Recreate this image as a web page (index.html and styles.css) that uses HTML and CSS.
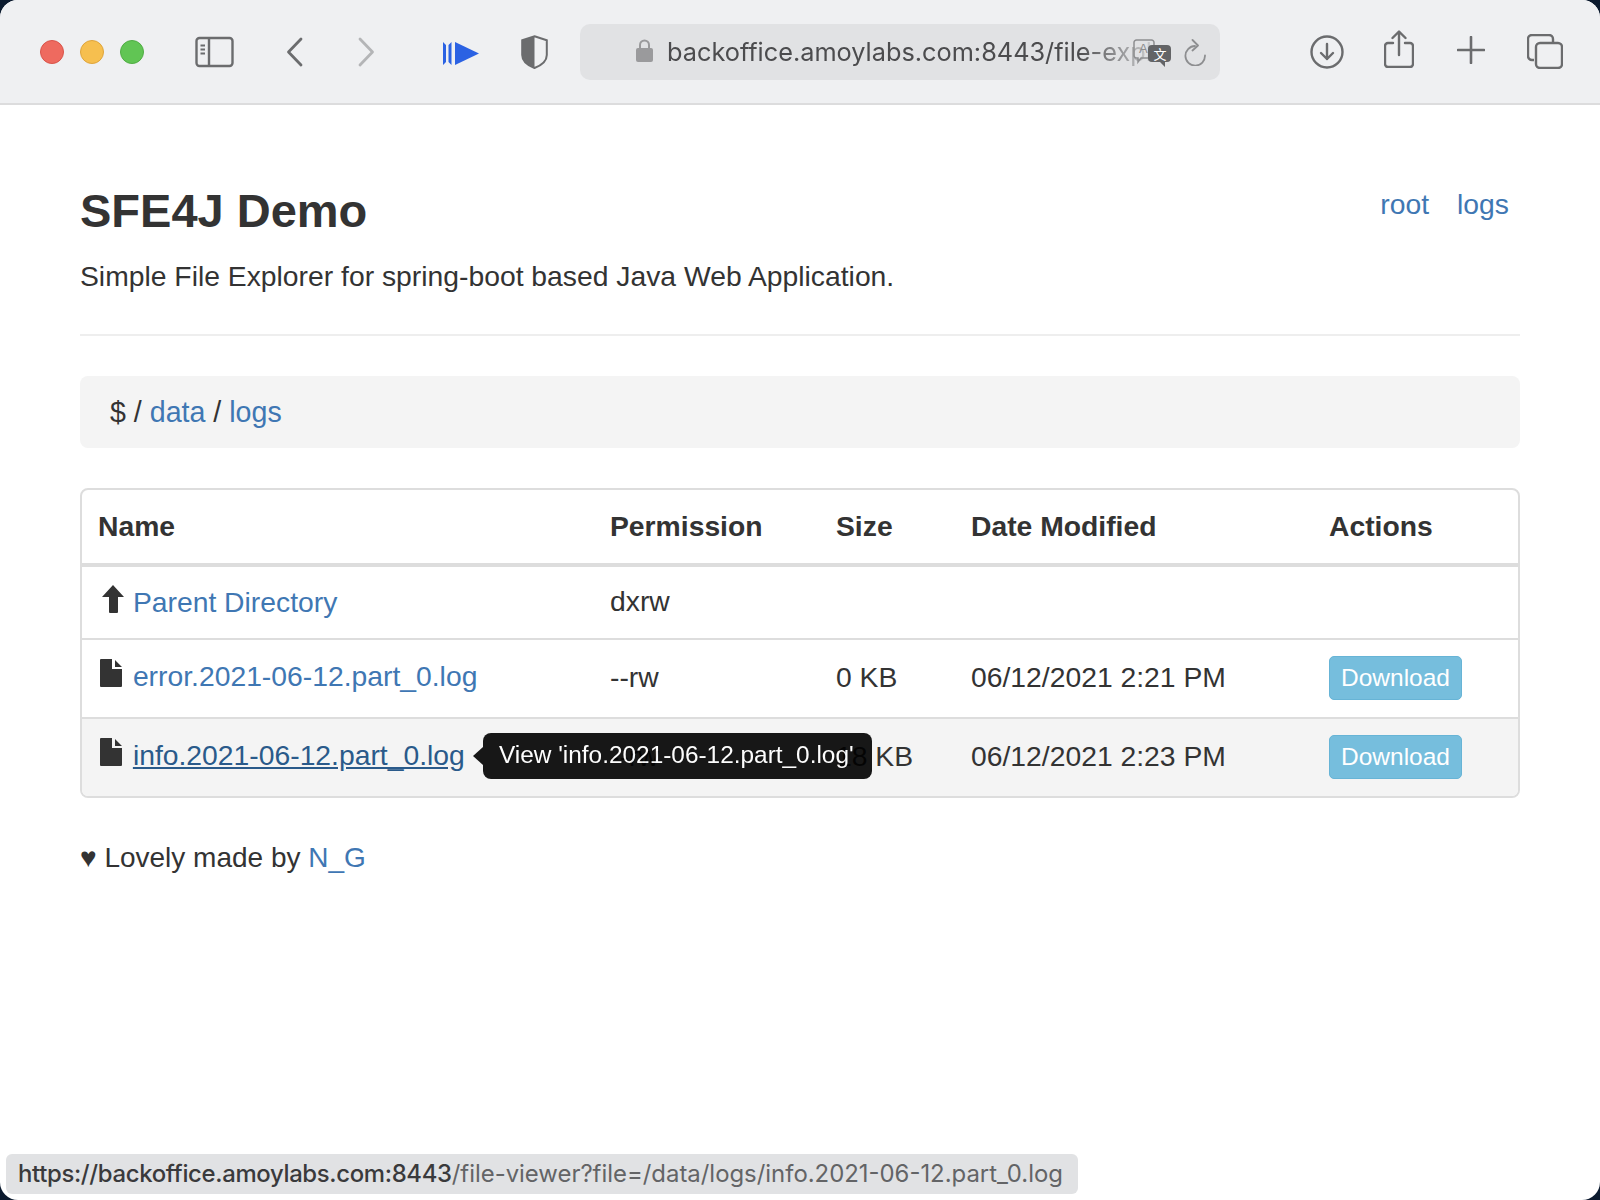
FILE: index.html
```html
<!DOCTYPE html>
<html lang="en">
<head>
    <meta charset="UTF-8">
    <title>SFE4J Demo</title>
    <link rel="stylesheet" href="styles.css">
</head>
<body>
    <div class="window">
        <div class="toolbar">
            <div class="lights">
                <span class="light red"></span>
                <span class="light yellow"></span>
                <span class="light green"></span>
            </div>
            <svg class="icon sidebar-icon" width="40" height="32" viewBox="0 0 40 32" fill="none" stroke="#6b6c6e" stroke-width="2.4">
                <rect x="1.5" y="2" width="36" height="28" rx="3"/>
                <path d="M14 2v28"/>
                <path d="M5.5 9.5h4.500M5.500 13.500h4.500M5.500 17.500h4.500" stroke-width="2"/>
            </svg>
            <svg class="icon back-icon" width="18" height="30" viewBox="0 0 18 30" fill="none" stroke="#6b6c6e" stroke-width="2.800" stroke-linecap="round" stroke-linejoin="round">
                <path d="M15 2 2.500 15 15 28"/>
            </svg>
            <svg class="icon forward-icon" width="18" height="30" viewBox="0 0 18 30" fill="none" stroke="#b4b5b7" stroke-width="2.800" stroke-linecap="round" stroke-linejoin="round">
                <path d="M3 2l12.500 13L3 28"/>
            </svg>
            <svg class="icon play-icon" width="36" height="23" viewBox="0 0 36 23">
                <path d="M0 0l3 3v17l-3 3zM8.500 0l-3 3v17l3 3z" fill="#2b62e3"/>
                <path d="M12 0l24 11.500L12 23z" fill="#2b62e3"/>
            </svg>
            <svg class="icon shield-icon" width="27" height="34" viewBox="0 0 27 34">
                <path d="M13.500 1.200 25.800 5.200v14.800c0 6-5.800 10.500-12.300 13C7 30.500 1.200 26 1.200 20V5.200z" fill="none" stroke="#6b6c6e" stroke-width="2"/>
                <path d="M13.500 1.200 1.200 5.200v14.800c0 6 5.800 10.500 12.300 13z" fill="#6b6c6e"/>
            </svg>
            <div class="address">
                <svg class="lock" width="17" height="23" viewBox="0 0 17 23">
                    <path d="M4 10V6a4.500 4.500 0 0 1 9 0v4" fill="none" stroke="#9a9a9c" stroke-width="2"/>
                    <rect x="0" y="9" width="17" height="14" rx="2" fill="#9a9a9c"/>
                </svg>
                <span class="url">backoffice.amoylabs.com:8443/file-explorer</span>
                <svg class="translate" width="38" height="28" viewBox="0 0 38 28">
                    <path d="M3.500 1h15a2.500 2.500 0 0 1 2.500 2.500v13a2.500 2.500 0 0 1-2.500 2.500H8l-3 4v-4H3.500A2.500 2.500 0 0 1 1 16.500v-13A2.500 2.500 0 0 1 3.500 1z" fill="none" stroke="#8d8e90" stroke-width="1.500"/>
                    <text x="6" y="14" class="translate-a">A</text>
                    <path d="M19 6h15a4 4 0 0 1 4 4v9a4 4 0 0 1-4 4h-2v5l-5-5h-8a4 4 0 0 1-4-4v-9a4 4 0 0 1 4-4z" fill="#636466"/>
                    <text x="20.500" y="20" class="translate-zh">文</text>
                </svg>
                <svg class="reload" width="23" height="27" viewBox="0 0 23 27" fill="none" stroke="#8d8e90" stroke-width="1.800" stroke-linecap="round" stroke-linejoin="round">
                    <path d="M11 7A9.800 9.800 0 1 0 21 16.500"/>
                    <path d="M8.500 1l5.500 5.500-5.500 5"/>
                </svg>
            </div>
            <svg class="icon download-icon" width="34" height="34" viewBox="0 0 34 34" fill="none" stroke="#6b6c6e" stroke-width="2.400" stroke-linecap="round" stroke-linejoin="round">
                <circle cx="17" cy="17" r="15.500"/>
                <path d="M17 9v15M11 18l6 6 6-6"/>
            </svg>
            <svg class="icon share-icon" width="30" height="38" viewBox="0 0 30 38" fill="none" stroke="#6b6c6e" stroke-width="2.400" stroke-linecap="round" stroke-linejoin="round">
                <path d="M9 13H4a3 3 0 0 0-3 3v18a3 3 0 0 0 3 3h22a3 3 0 0 0 3-3V16a3 3 0 0 0-3-3h-5"/>
                <path d="M15 25V2M8.500 8 15 1.500 21.500 8"/>
            </svg>
            <svg class="icon plus-icon" width="28" height="28" viewBox="0 0 28 28" fill="none" stroke="#6b6c6e" stroke-width="2.600" stroke-linecap="round">
                <path d="M14 1v26M1 14h26"/>
            </svg>
            <svg class="icon tabs-icon" width="36" height="35" viewBox="0 0 36 35" fill="none" stroke="#6b6c6e" stroke-width="2.400" stroke-linejoin="round">
                <path d="M7 26H5a4 4 0 0 1-4-4V5a4 4 0 0 1 4-4h17a4 4 0 0 1 4 4v3"/>
                <rect x="9" y="9" width="26" height="25" rx="4"/>
            </svg>
        </div>

        <div class="container">
            <div class="header">
                <div class="brand">
                    <h1>SFE4J Demo</h1>
                    <p class="lead">Simple File Explorer for spring-boot based Java Web Application.</p>
                </div>
                <div class="nav">
                    <a href="#">root</a>
                    <a href="#">logs</a>
                </div>
            </div>

            <div class="breadcrumb">$ / <a href="#">data</a> / <a href="#">logs</a></div>

            <div class="table-wrap">
                <table>
                    <thead>
                        <tr>
                            <th class="col-name">Name</th>
                            <th class="col-perm">Permission</th>
                            <th class="col-size">Size</th>
                            <th class="col-date">Date Modified</th>
                            <th>Actions</th>
                        </tr>
                    </thead>
                    <tbody>
                        <tr class="row-parent">
                            <td>
                                <svg class="file-icon" width="22" height="28" viewBox="0 0 22 28"><path d="M11 0 22 12h-6v15a1 1 0 0 1-1 1H8a1 1 0 0 1-1-1V12H0z" fill="#333"/></svg>
                                <a href="#">Parent Directory</a>
                            </td>
                            <td>dxrw</td>
                            <td></td>
                            <td></td>
                            <td></td>
                        </tr>
                        <tr>
                            <td>
                                <svg class="file-icon" width="22" height="28" viewBox="0 0 22 28"><path d="M1 0h11v10h10v17a1 1 0 0 1-1 1H1a1 1 0 0 1-1-1V1a1 1 0 0 1 1-1zM15 1l7 7h-7z" fill="#333"/></svg>
                                <a href="#">error.2021-06-12.part_0.log</a>
                            </td>
                            <td>--rw</td>
                            <td>0 KB</td>
                            <td>06/12/2021 2:21 PM</td>
                            <td><a class="btn" href="#">Download</a></td>
                        </tr>
                        <tr class="row-hover">
                            <td>
                                <svg class="file-icon" width="22" height="28" viewBox="0 0 22 28"><path d="M1 0h11v10h10v17a1 1 0 0 1-1 1H1a1 1 0 0 1-1-1V1a1 1 0 0 1 1-1zM15 1l7 7h-7z" fill="#333"/></svg>
                                <a class="link-hover" href="#">info.2021-06-12.part_0.log</a>
                                <span class="tooltip">View 'info.2021-06-12.part_0.log'</span>
                            </td>
                            <td>--rw</td>
                            <td>18 KB</td>
                            <td>06/12/2021 2:23 PM</td>
                            <td><a class="btn" href="#">Download</a></td>
                        </tr>
                    </tbody>
                </table>
            </div>

            <p class="footer">&hearts; Lovely made by <a href="#">N_G</a></p>
        </div>

        <div class="statusbar"><b>https://backoffice.amoylabs.com:8443</b>/file-viewer?file=/data/logs/info.2021-06-12.part_0.log</div>
    </div>
</body>
</html>
```

FILE: styles.css
```css
* {
    box-sizing: border-box;
}
html, body {
    margin: 0;
    padding: 0;
}
body {
    width: 1600px;
    height: 1200px;
    background-color: #0b1a2e;
    font-family: "Liberation Sans", Arial, sans-serif;
    color: #333;
    overflow: hidden;
}
a {
    color: #3f77b3;
    text-decoration: none;
}
.window {
    position: relative;
    width: 1600px;
    height: 1200px;
    background: white;
    border-radius: 18px;
    overflow: hidden;
}

/* browser toolbar */
.toolbar {
    height: 105px;
    background-color: #eff0f2;
    border-bottom: 2px solid #dcdcdd;
    display: flex;
    align-items: center;
    padding: 0 0 0 40px;
}
.lights {
    display: flex;
    gap: 16px;
}
.light {
    width: 24px;
    height: 24px;
    border-radius: 50%;
}
.red {
    background-color: #ee6a5f;
    border: 1px solid #d9544a;
}
.yellow {
    background-color: #f6bf4f;
    border: 1px solid #dfa53c;
}
.green {
    background-color: #61c554;
    border: 1px solid #50ad44;
}
.icon {
    flex: none;
}
.sidebar-icon {
    margin-left: 51px;
}
.back-icon {
    margin-left: 51px;
}
.forward-icon {
    margin-left: 53px;
}
.play-icon {
    margin-left: 68px;
    margin-top: 3px;
}
.shield-icon {
    margin-left: 42px;
}
.address {
    width: 640px;
    height: 56px;
    margin-left: 32px;
    background-color: #e1e2e4;
    border-radius: 10px;
    display: flex;
    align-items: center;
    padding-left: 56px;
    position: relative;
}
.lock {
    flex: none;
    margin-top: -3px;
}
.url {
    margin-left: 14px;
    width: 484px;
    font-family: Inter, sans-serif;
    font-size: 25.3px;
    color: #4c4c4e;
    white-space: nowrap;
    overflow: hidden;
    -webkit-mask-image: linear-gradient(to right, black 85%, rgba(0, 0, 0, 0.15) 100%);
    mask-image: linear-gradient(to right, black 85%, rgba(0, 0, 0, 0.15) 100%);
}
.translate {
    position: absolute;
    left: 553px;
    top: 15px;
}
.translate-a {
    font-family: "Liberation Sans", sans-serif;
    font-size: 13px;
    fill: #8d8e90;
}
.translate-zh {
    font-family: "Noto Sans CJK SC", sans-serif;
    font-size: 13px;
    fill: white;
}
.reload {
    position: absolute;
    left: 604px;
    top: 15px;
}
.download-icon {
    margin-left: 90px;
}
.share-icon {
    margin-left: 40px;
    margin-top: -5px;
}
.plus-icon {
    margin-left: 43px;
    margin-top: -3px;
}
.tabs-icon {
    margin-left: 42px;
}

/* page */
.container {
    padding: 0 80px;
}
.header {
    display: flex;
    justify-content: space-between;
    align-items: flex-start;
    padding-top: 76px;
    height: 231px;
    border-bottom: 2px solid #eeeeee;
}
h1 {
    margin: 0;
    font-size: 47px;
    line-height: 60px;
    font-weight: bold;
}
.lead {
    margin: 16px 0 0;
    font-size: 28.3px;
    line-height: 38px;
}
.nav {
    display: flex;
    gap: 28px;
    padding-right: 11px;
    font-size: 28.3px;
    line-height: 38px;
    margin-top: 4px;
}
.breadcrumb {
    margin-top: 40px;
    height: 72px;
    background-color: #f4f4f4;
    border-radius: 8px;
    padding: 0 30px;
    font-size: 28.6px;
    line-height: 73px;
}
.table-wrap {
    margin-top: 40px;
    border: 2px solid #dddddd;
    border-radius: 8px;
}
table {
    width: 100%;
    border-collapse: collapse;
    table-layout: fixed;
    font-size: 28.3px;
}
th {
    text-align: left;
    font-weight: bold;
    height: 75px;
    padding: 0 16px;
    border-bottom: 4px solid #dddddd;
}
td {
    padding: 0 16px 2px;
    height: 74px;
    border-top: 2px solid #dddddd;
    position: relative;
}
thead + tbody tr:first-child td {
    border-top: none;
}
tbody tr:nth-child(2) td {
    height: 79px;
    padding-bottom: 3px;
}
tbody tr:nth-child(2) td:first-child {
    padding-bottom: 5px;
}
tbody tr:nth-child(2) td:last-child {
    padding-bottom: 1px;
}
tbody tr:nth-child(3) td {
    height: 78px;
}
tbody tr:nth-child(3) td:first-child {
    padding-bottom: 6px;
}
.col-name {
    width: 512px;
}
.col-perm {
    width: 226px;
}
.col-size {
    width: 135px;
}
.col-date {
    width: 358px;
}
.row-hover td {
    background-color: #f4f4f4;
}
.row-hover td:first-child {
    border-bottom-left-radius: 6px;
}
.row-hover td:last-child {
    border-bottom-right-radius: 6px;
}
.link-hover {
    color: #2a5a8a;
    text-decoration: underline;
}
.file-icon {
    vertical-align: -1px;
    margin-right: 3px;
    margin-left: 2px;
}
.row-parent .file-icon {
    vertical-align: -1px;
    margin-left: 4px;
    margin-right: 1px;
}
.btn {
    display: inline-block;
    height: 44px;
    padding: 0 11px;
    line-height: 42px;
    font-size: 24.5px;
    color: white;
    background-color: #76bedd;
    border: 1px solid #67b4d6;
    border-radius: 5px;
}
.tooltip {
    position: absolute;
    left: 401px;
    top: 14px;
    width: 389px;
    height: 46px;
    padding-left: 16px;
    line-height: 44px;
    font-size: 24.4px;
    color: white;
    background-color: black;
    opacity: 0.9;
    border-radius: 8px;
    white-space: nowrap;
    z-index: 2;
}
.tooltip::before {
    content: "";
    position: absolute;
    left: -10px;
    top: 14px;
    border-top: 9px solid transparent;
    border-bottom: 9px solid transparent;
    border-right: 10px solid black;
}
.footer {
    margin: 40px 0 0;
    font-size: 28px;
    line-height: 40px;
}

/* link preview at the bottom */
.statusbar {
    position: absolute;
    left: 6px;
    top: 1154px;
    width: 1072px;
    height: 40px;
    padding-left: 12px;
    background-color: #e1e2e4;
    border-radius: 6px;
    font-family: Inter, sans-serif;
    font-size: 23.9px;
    line-height: 40px;
    color: #636466;
    white-space: nowrap;
    overflow: hidden;
}
.statusbar b {
    font-weight: 500;
    color: #3a3a3c;
    letter-spacing: -0.33px;
}
```
